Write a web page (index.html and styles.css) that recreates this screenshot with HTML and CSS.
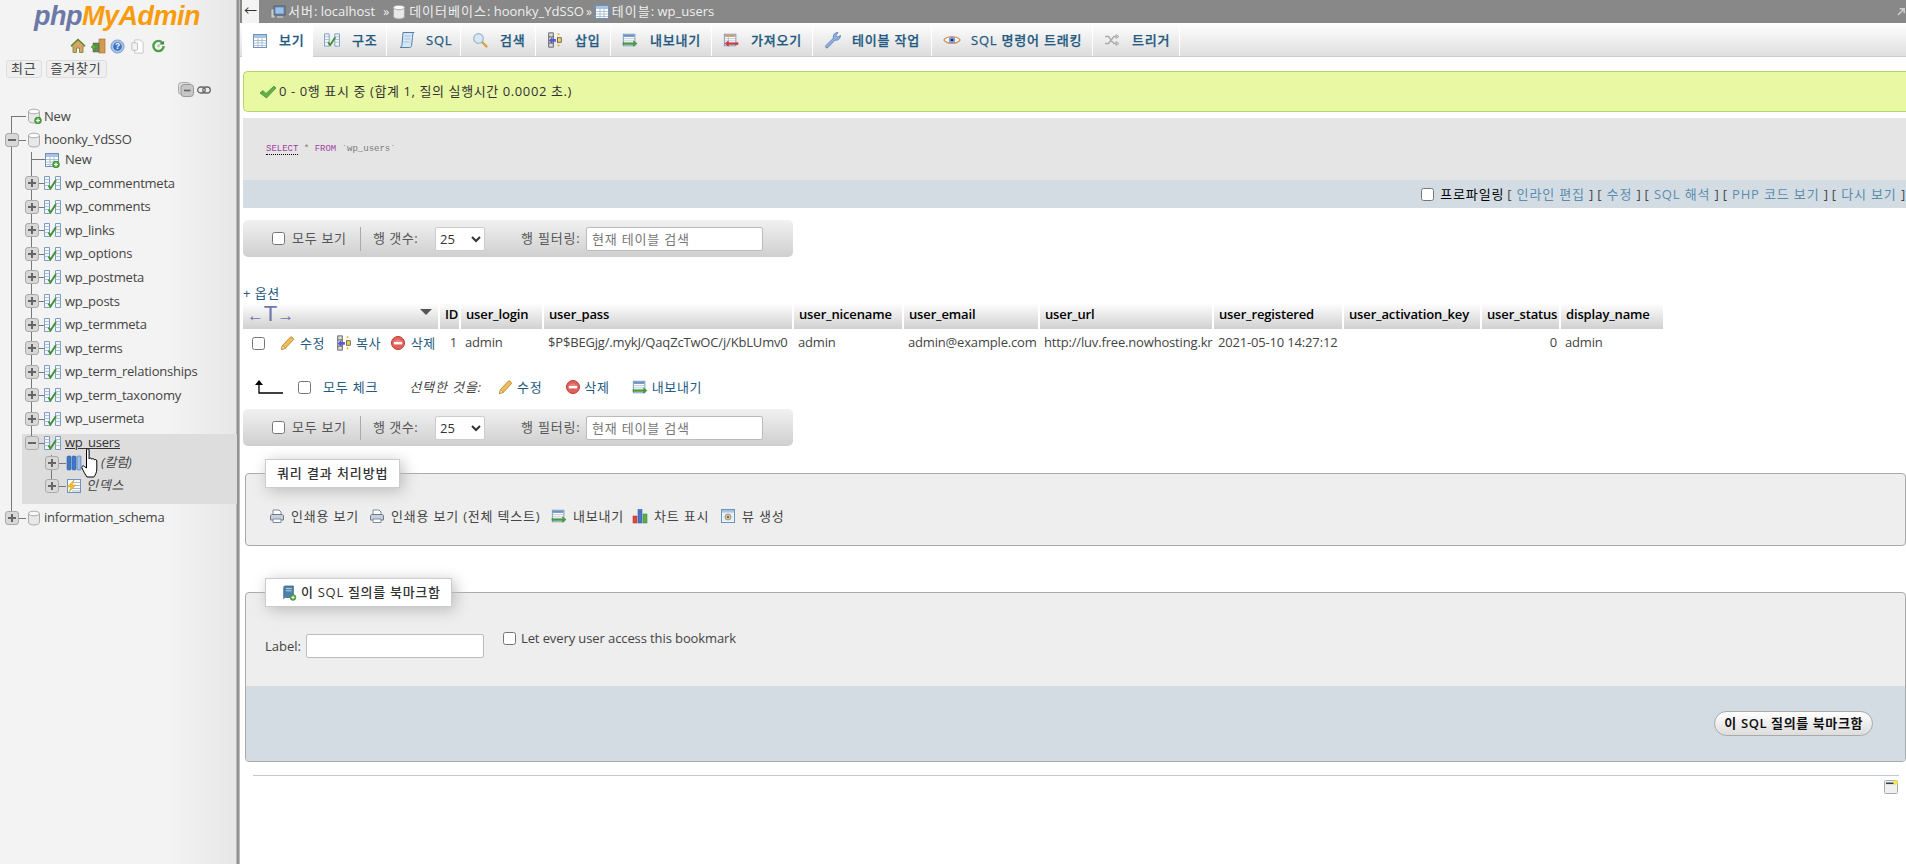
FILE: index.html
```html
<!DOCTYPE html>
<html lang="ko">
<head>
<meta charset="utf-8">
<title>phpMyAdmin</title>
<link rel="stylesheet" href="styles.css">
</head>
<body>
<svg class="defs" aria-hidden="true">
  <defs>
    <symbol id="i-plusb" viewBox="0 0 16 16"><circle cx="12" cy="12.5" r="3.4" fill="#4fa83d" stroke="#2f7a26" stroke-width=".6"/><path d="M10 12.5h4M12 10.500v4" stroke="#fff" stroke-width="1.2"/></symbol>
    <symbol id="i-db" viewBox="0 0 16 16"><path d="M2.500 3.500v9c0 1.300 2.400 2.500 5.500 2.500s5.500-1.200 5.500-2.500v-9z" fill="#e8e8e8" stroke="#9a9a9a" stroke-width=".8"/><ellipse cx="8" cy="3.500" rx="5.500" ry="2.300" fill="#fafafa" stroke="#9a9a9a" stroke-width=".8"/></symbol>
    <symbol id="i-table" viewBox="0 0 16 16"><rect x="1.500" y="1.500" width="13" height="13" fill="#fff" stroke="#6d93bd"/><rect x="2" y="2" width="12" height="3" fill="#a9c4e0"/><path d="M2 7.500h12M2 10h12M2 12.500h12M6 5v9M10 5v9" stroke="#9db4cc" stroke-width=".8"/></symbol>
    <symbol id="i-struct" viewBox="0 0 17 16"><path d="M.5 1.500h5v13h-5zM11.500 1.500h5v13h-5z" fill="#f2f6fb" stroke="#6d93bd" stroke-width=".9"/><path d="M.5 4.500h5M.5 7.500h5M.5 10.500h5M11.500 4.500h5M11.500 7.500h5M11.500 10.500h5" stroke="#9db4cc" stroke-width=".8"/><path d="M4.500 10.500l2 3L12 5" fill="none" stroke="#3f8f33" stroke-width="1.900"/></symbol>
    <symbol id="i-sql" viewBox="0 0 18 18"><path d="M5 1.500h11c-1.500 1-1.500 3-1.500 5l-1 8c-.2 1.500-1 2-2 2H2c1.500-.5 1.800-1.500 2-3z" fill="#d8e6f4" stroke="#4f7fae"/><path d="M6.500 5h6M6 8h6M5.500 11h6" stroke="#9dbad8" stroke-width=".8"/></symbol>
    <symbol id="i-search" viewBox="0 0 16 16"><path d="M9.500 9.500l5 5" stroke="#d9a03c" stroke-width="2.400" stroke-linecap="round"/><circle cx="6.500" cy="6.500" r="4.800" fill="#d6e9f8" stroke="#9fb3c5" stroke-width="1.200"/></symbol>
    <symbol id="i-insert" viewBox="0 0 16 18"><rect x="1" y="1" width="5" height="16" fill="#ddd" stroke="#333" stroke-width=".8"/><path d="M1 5.500h5M1 12.500h5" stroke="#333" stroke-width=".8"/><path d="M9 8H5V5.500L1 9.500l4 4V11h4z" fill="#5a5ad0"/><rect x="11" y="1.500" width="2" height="2" fill="#e3b32c"/><rect x="11" y="6.500" width="4" height="5" fill="#f3d25c" stroke="#222" stroke-width=".7"/><rect x="11" y="14" width="2" height="2" fill="#e3b32c"/></symbol>
    <symbol id="i-export" viewBox="0 0 18 16"><rect x="1.500" y="1.500" width="13" height="13" fill="#fff" stroke="#6d93bd"/><rect x="2" y="2" width="12" height="2.500" fill="#6d93bd"/><path d="M2 6.500h12M2 9h12" stroke="#9db4cc" stroke-width=".8"/><path d="M1 11h12V9l4 3-4 3v-2H1z" fill="#4aa03c" stroke="#2d7a24" stroke-width=".5"/></symbol>
    <symbol id="i-import" viewBox="0 0 18 16"><rect x="1.500" y="1.500" width="13" height="13" fill="#fff" stroke="#6d93bd"/><rect x="2" y="2" width="12" height="2.500" fill="#d69a6a"/><path d="M2 6.500h12M2 9h12M6 4.500V14" stroke="#9db4cc" stroke-width=".8"/><path d="M17 11H6V9l-4 3 4 3v-2h11z" fill="#df3b3b" stroke="#a82525" stroke-width=".5"/></symbol>
    <symbol id="i-wrench" viewBox="0 0 18 18"><path d="M2 14.500l7.500-7.500c-.8-2.500.8-5.500 4.500-5.500l-2 3 1.500 1.500 3-1.500c0 3.500-3 5.500-5.500 4.500L4 16.500c-1.500 1.200-3.300-.5-2-2z" fill="#8fb0e0" stroke="#5878b0" stroke-width=".8"/></symbol>
    <symbol id="i-eye" viewBox="0 0 18 14"><path d="M1 7c3-4.500 13-4.500 16 0-3 4.500-13 4.500-16 0z" fill="#fff" stroke="#d49a6a" stroke-width="1.400"/><circle cx="9" cy="7" r="3.300" fill="#7c9bd8"/><circle cx="9" cy="7" r="1.300" fill="#1b2a66"/></symbol>
    <symbol id="i-trigger" viewBox="0 0 16 14"><path d="M1 3.500h3.500l5.500 7h2.500M1 10.500h3.500l5.500-7h2.500" fill="none" stroke="#aaa" stroke-width="1.300"/><path d="M12 1.500l3 2-3 2zM12 8.500l3 2-3 2z" fill="#ccc" stroke="#888" stroke-width=".5"/></symbol>
    <symbol id="i-pencil" viewBox="0 0 16 16"><path d="M1.500 14.500l1-4 8-8.500c1-.8 3.500 1.500 2.800 2.800l-8 8.500z" fill="#f0bd56" stroke="#a87a20" stroke-width=".8"/><path d="M1.500 14.500l1-4 3 2.800z" fill="#ffe9c0" stroke="#a87a20" stroke-width=".6"/></symbol>
    <symbol id="i-del" viewBox="0 0 16 16"><circle cx="8" cy="8" r="6.500" fill="#e2605a" stroke="#b93a36"/><path d="M4.500 5.500a6 4 0 0 1 7 0" fill="#f2a8a4"/><rect x="3.800" y="6.800" width="8.400" height="2.600" fill="#fff"/></symbol>
    <symbol id="i-print" viewBox="0 0 16 16"><path d="M4 7V2h6l2 2v3" fill="#fff" stroke="#7c8aa0"/><path d="M1.500 8c0-1 1-1.500 1.500-1.500h10c.6 0 1.500.5 1.500 1.500v4h-13z" fill="#c6d0dc" stroke="#6f7c90"/><path d="M4 11h8v3.500H4z" fill="#fff" stroke="#7c8aa0"/></symbol>
    <symbol id="i-chart" viewBox="0 0 16 16"><rect x="1" y="8" width="4" height="7" fill="#e04a3f" stroke="#a52c24" stroke-width=".5"/><rect x="6" y="1.500" width="4" height="13.500" fill="#4a78c8" stroke="#2c5096" stroke-width=".5"/><rect x="11" y="6" width="4" height="9" fill="#5aaf4a" stroke="#37802a" stroke-width=".5"/></symbol>
    <symbol id="i-view" viewBox="0 0 16 16"><rect x="1.500" y="1.500" width="13" height="13" fill="#e8f0f8" stroke="#6d93bd"/><rect x="2" y="2" width="12" height="2.500" fill="#a9c4e0"/><circle cx="8" cy="9" r="3" fill="#d8c8a8" stroke="#8a7a5a" stroke-width=".7"/><circle cx="8" cy="9" r="1" fill="#445"/></symbol>
    <symbol id="i-book" viewBox="0 0 16 18"><path d="M2 2.500c0-1 1-1.500 2-1.500h9v13H4c-1 0-2 .5-2 1.500z" fill="#4f80a8" stroke="#2f5a80" stroke-width=".7"/><path d="M4.500 4h6.500M4.500 6.500h6.500" stroke="#c8dcec" stroke-width="1"/><circle cx="12.500" cy="14" r="3.300" fill="#55aa44" stroke="#2f7a26" stroke-width=".5"/><path d="M10.700 14h3.600M12.500 12.200v3.600" stroke="#fff" stroke-width="1.100"/></symbol>
    <symbol id="i-server" viewBox="0 0 16 16"><rect x="1" y="5" width="4" height="9" fill="#c8ccd0" stroke="#777" stroke-width=".6"/><rect x="4" y="2" width="11" height="9" fill="#5f8fc8" stroke="#555" stroke-width=".8"/><rect x="5.500" y="3.500" width="8" height="6" fill="#9cc0e8"/><path d="M7 13h6" stroke="#bbb" stroke-width="1.600"/></symbol>
    <symbol id="i-check" viewBox="0 0 18 16"><path d="M1 9l3-2.500 3 3L15 2l2 2L7.500 14z" fill="#63b04a" stroke="#3f8a32" stroke-width=".7"/></symbol>
  </defs>
</svg>

<div class="page">
  <nav class="side">
    <div class="logo"><span class="logo-php">php</span><span class="logo-my">MyAdmin</span></div>
    <div class="side-icons">
      <svg class="sic" viewBox="0 0 16 16"><path d="M1 8l7-6.500L15 8h-2v6.500H9.500V10h-3v4.500H3V8z" fill="#d9a468" stroke="#7d8a3a" stroke-width=".9"/><path d="M1 8l7-6.500L15 8" fill="none" stroke="#5c8a2e" stroke-width="1.400"/></svg>
      <svg class="sic" viewBox="0 0 16 16"><rect x="9" y="1" width="6" height="14" fill="#d49a50" stroke="#9a6a28" stroke-width=".6"/><rect x="3" y="5" width="6" height="9" fill="#6a8a5a" stroke="#455" stroke-width=".5"/><path d="M1 9l4-3.500V8h3.500v2H5v2.500z" fill="#5fae3e" stroke="#3c7a26" stroke-width=".5"/></svg>
      <svg class="sic sic-n" viewBox="0 0 16 16"><circle cx="8" cy="8" r="7" fill="#a9c6ea" stroke="#7f9dc4"/><circle cx="8" cy="8" r="4.600" fill="#3f74c0"/><text x="8" y="11" class="q">?</text></svg>
      <svg class="sic sic-n" viewBox="0 0 16 16"><path d="M5 1h6l3 3v11H5z" fill="#fff" stroke="#c4c4c4"/><rect x="2" y="4" width="6" height="8" rx="1" fill="#f4f4f4" stroke="#bbb"/></svg>
      <svg class="sic sic-s" viewBox="0 0 14 14"><path d="M12.500 7A5.500 5.500 0 1 1 7 1.500c2 0 3 .8 4 2" fill="none" stroke="#4fa04a" stroke-width="2.600"/><path d="M7.500 5.500h5.500v-4z" fill="#3f8a3a"/><circle cx="7" cy="7" r="1.500" fill="#a8cfa4"/></svg>
    </div>
    <div class="side-tabs"><span class="side-btn">최근</span><span class="side-btn">즐겨찾기</span></div>
    <div class="side-tools">
      <svg class="collapse" viewBox="0 0 16 15"><rect x=".5" y=".5" width="12" height="12" rx="3" fill="#ddd" stroke="#aaa"/><rect x="3" y="2.500" width="12.500" height="12" rx="3" fill="#c6c6c6" stroke="#999"/><path d="M6 8.500h6.500" stroke="#666" stroke-width="1.600"/></svg>
      <svg class="chain" viewBox="0 0 14 8"><rect x=".7" y="1" width="7.500" height="6" rx="3" fill="none" stroke="#666" stroke-width="1.300"/><rect x="5.800" y="1" width="7.500" height="6" rx="3" fill="none" stroke="#666" stroke-width="1.300"/></svg>
    </div>

    <div class="tree">
      <div class="row r-new0"><span class="g dn-last"></span><svg class="ti db"><use href="#i-db"/><use href="#i-plusb"/></svg><span class="t">New</span></div>
      <div class="row"><span class="g tee"><b class="ex minus"></b></span><svg class="ti db"><use href="#i-db"/></svg><span class="t">hoonky_YdSSO</span></div>
      <div class="row r-new1"><span class="g bar"></span><span class="g tee"></span><svg class="ti tb"><use href="#i-table"/><use href="#i-plusb"/></svg><span class="t">New</span></div>
      <div class="row"><span class="g bar"></span><span class="g tee"><b class="ex"></b></span><svg class="ti st"><use href="#i-struct"/></svg><span class="t">wp_commentmeta</span></div>
      <div class="row"><span class="g bar"></span><span class="g tee"><b class="ex"></b></span><svg class="ti st"><use href="#i-struct"/></svg><span class="t">wp_comments</span></div>
      <div class="row"><span class="g bar"></span><span class="g tee"><b class="ex"></b></span><svg class="ti st"><use href="#i-struct"/></svg><span class="t">wp_links</span></div>
      <div class="row"><span class="g bar"></span><span class="g tee"><b class="ex"></b></span><svg class="ti st"><use href="#i-struct"/></svg><span class="t">wp_options</span></div>
      <div class="row"><span class="g bar"></span><span class="g tee"><b class="ex"></b></span><svg class="ti st"><use href="#i-struct"/></svg><span class="t">wp_postmeta</span></div>
      <div class="row"><span class="g bar"></span><span class="g tee"><b class="ex"></b></span><svg class="ti st"><use href="#i-struct"/></svg><span class="t">wp_posts</span></div>
      <div class="row"><span class="g bar"></span><span class="g tee"><b class="ex"></b></span><svg class="ti st"><use href="#i-struct"/></svg><span class="t">wp_termmeta</span></div>
      <div class="row"><span class="g bar"></span><span class="g tee"><b class="ex"></b></span><svg class="ti st"><use href="#i-struct"/></svg><span class="t">wp_terms</span></div>
      <div class="row"><span class="g bar"></span><span class="g tee"><b class="ex"></b></span><svg class="ti st"><use href="#i-struct"/></svg><span class="t">wp_term_relationships</span></div>
      <div class="row"><span class="g bar"></span><span class="g tee"><b class="ex"></b></span><svg class="ti st"><use href="#i-struct"/></svg><span class="t">wp_term_taxonomy</span></div>
      <div class="row"><span class="g bar"></span><span class="g tee"><b class="ex"></b></span><svg class="ti st"><use href="#i-struct"/></svg><span class="t">wp_usermeta</span></div>
      <div class="hl">
        <div class="row r-last"><span class="g bar"></span><span class="g up"><b class="ex minus"></b></span><svg class="ti st"><use href="#i-struct"/></svg><span class="t u">wp_users</span></div>
        <div class="row r-col"><span class="g bar"></span><span class="g"></span><span class="g tee"><b class="ex"></b></span><svg class="ti cl" viewBox="0 0 16 16"><rect x="1" y="1" width="4" height="14" rx="1" fill="#3f78c8" stroke="#2a5aa0" stroke-width=".5"/><rect x="6" y="1" width="4" height="14" rx="1" fill="#3f78c8" stroke="#2a5aa0" stroke-width=".5"/><rect x="11" y="1" width="4" height="14" rx="1" fill="#9fc0e8" stroke="#2a5aa0" stroke-width=".5"/></svg><span class="t it col">(칼럼)</span></div>
        <div class="row r-idx"><span class="g bar"></span><span class="g"></span><span class="g up"><b class="ex"></b></span><svg class="ti cl" viewBox="0 0 16 16"><rect x="1.500" y="1.500" width="13" height="13" fill="#fff" stroke="#6d93bd"/><path d="M6 4.500h8M6 7.500h8M6 10.500h8M6 13h8" stroke="#8fa8c4" stroke-width=".8"/><path d="M8 2L1 9h4l-2 5 7-7H6z" fill="#f0c030" stroke="#c89820" stroke-width=".5"/></svg><span class="t it idx">인덱스</span></div>
      </div>
      <div class="row r-end"><span class="g up"><b class="ex"></b></span><svg class="ti db"><use href="#i-db"/></svg><span class="t">information_schema</span></div>
    </div>
    <svg class="hand" viewBox="0 0 17 30"><path d="M5.500 2c0-1.600 2.600-1.600 2.600 0v9c.2-1.200 2.600-1.200 2.700.3.200-1 2.500-1 2.600.6.300-.8 2.400-.6 2.400 1.100v8c0 3-1.500 6.500-3 8H6c-1.500-2-4-6.500-5-9-.6-1.700 1.200-3 2.400-1.500L5.500 20z" fill="#fff" stroke="#000" stroke-width="1"/></svg>
  </nav>

  <main class="main">
    <header class="crumbs">
      <span class="back">←</span>
      <svg class="cic"><use href="#i-server"/></svg><span><span class="ko">서버</span>: localhost</span><span class="sep sep1">»</span>
      <svg class="cic c-db"><use href="#i-db"/></svg><span><span class="ko">데이터베이스</span>: hoonky_YdSSO</span><span class="sep sep2">»</span>
      <svg class="cic"><use href="#i-table"/></svg><span><span class="ko">테이블</span>: wp_users</span>
      <svg class="corner" viewBox="0 0 10 10"><path d="M1 9l7-7M3 2h5v5" fill="none" stroke="#cfcfcf" stroke-width="1.600"/></svg>
    </header>

    <div class="tabs">
      <a class="tab on"><svg class="tic"><use href="#i-table"/></svg>보기</a>
      <a class="tab"><svg class="tic"><use href="#i-struct"/></svg>구조</a>
      <a class="tab"><svg class="tic tic-l"><use href="#i-sql"/></svg>SQL</a>
      <a class="tab"><svg class="tic"><use href="#i-search"/></svg>검색</a>
      <a class="tab"><svg class="tic"><use href="#i-insert"/></svg>삽입</a>
      <a class="tab"><svg class="tic"><use href="#i-export"/></svg>내보내기</a>
      <a class="tab"><svg class="tic"><use href="#i-import"/></svg>가져오기</a>
      <a class="tab"><svg class="tic tic-l"><use href="#i-wrench"/></svg>테이블 작업</a>
      <a class="tab"><svg class="tic tic-l"><use href="#i-eye"/></svg>SQL 명령어 트래킹</a>
      <a class="tab"><svg class="tic"><use href="#i-trigger"/></svg>트리거</a>
    </div>

    <div class="msg"><svg class="msg-ic"><use href="#i-check"/></svg>0 - 0행 표시 중 (합계 1, 질의 실행시간 0.0002 초.)</div>

    <div class="sql"><code><span class="kw kw-u">SELECT</span> <span class="op">*</span> <span class="kw">FROM</span> <span class="id">`wp_users`</span></code></div>
    <div class="sqlbar">
      <input type="checkbox" class="cb"><span class="prof">프로파일링</span>
      <span class="blk">[ <a>인라인 편집</a> ]</span>
      <span class="blk">[ <a>수정</a> ]</span>
      <span class="blk">[ <a>SQL 해석</a> ]</span>
      <span class="blk">[ <a>PHP 코드 보기</a> ]</span>
      <span class="blk">[ <a>다시 보기</a> ]</span>
    </div>

    <div class="nav">
      <input type="checkbox" class="cb"><span class="n-all">모두 보기</span><span class="n-sep"></span>
      <span class="n-rows">행 갯수:</span><select class="sel"><option>25</option></select>
      <span class="n-filter">행 필터링:</span><input class="inp" placeholder="현재 테이블 검색">
    </div>

    <div class="opts"><a>+ 옵션</a></div>

    <table class="grid">
      <colgroup>
        <col class="c0"><col class="c1"><col class="c2"><col class="c3"><col class="c4"><col class="c5"><col class="c6"><col class="c7"><col class="c8"><col class="c9"><col class="c10">
      </colgroup>
      <thead>
        <tr>
          <th class="ctl"><span class="harrows">←<b>T</b>→</span><span class="tri"></span></th>
          <th>ID</th><th>user_login</th><th>user_pass</th><th>user_nicename</th><th>user_email</th><th>user_url</th><th>user_registered</th><th>user_activation_key</th><th>user_status</th><th>display_name</th>
        </tr>
      </thead>
      <tbody>
        <tr>
          <td class="ctl"><div class="acts">
            <input type="checkbox" class="cb cb-row">
            <svg class="ic16 a-ed"><use href="#i-pencil"/></svg><a>수정</a>
            <svg class="ic16 a-cp"><use href="#i-insert"/></svg><a>복사</a>
            <svg class="ic16 a-dl"><use href="#i-del"/></svg><a>삭제</a>
          </div></td>
          <td class="num">1</td><td>admin</td><td>$P$BEGjg/.mykJ/QaqZcTwOC/j/KbLUmv0</td><td>admin</td><td>admin@example.com</td><td>http://luv.free.nowhosting.kr</td><td>2021-05-10 14:27:12</td><td></td><td class="num">0</td><td>admin</td>
        </tr>
      </tbody>
    </table>

    <div class="bulk">
      <svg class="barrow" viewBox="0 0 28 14"><path d="M4 2v11h24" fill="none" stroke="#000" stroke-width="1.300"/><path d="M4 0L0 5h8z" fill="#000"/></svg>
      <input type="checkbox" class="cb"><a class="b-all">모두 체크</a>
      <em class="b-sel">선택한 것을:</em>
      <svg class="ic16 b-i1"><use href="#i-pencil"/></svg><a>수정</a>
      <svg class="ic16 b-i2"><use href="#i-del"/></svg><a>삭제</a>
      <svg class="ic16 b-i3"><use href="#i-export"/></svg><a>내보내기</a>
    </div>

    <div class="nav nav2">
      <input type="checkbox" class="cb"><span class="n-all">모두 보기</span><span class="n-sep"></span>
      <span class="n-rows">행 갯수:</span><select class="sel"><option>25</option></select>
      <span class="n-filter">행 필터링:</span><input class="inp" placeholder="현재 테이블 검색">
    </div>

    <section class="fs fs1">
      <div class="lg">쿼리 결과 처리방법</div>
      <div class="links">
        <span class="lk"><svg class="ic16"><use href="#i-print"/></svg><a>인쇄용 보기</a></span>
        <span class="lk"><svg class="ic16"><use href="#i-print"/></svg><a>인쇄용 보기 (전체 텍스트)</a></span>
        <span class="lk"><svg class="ic16"><use href="#i-export"/></svg><a>내보내기</a></span>
        <span class="lk"><svg class="ic16"><use href="#i-chart"/></svg><a>차트 표시</a></span>
        <span class="lk"><svg class="ic16"><use href="#i-view"/></svg><a>뷰 생성</a></span>
      </div>
    </section>

    <section class="fs fs2">
      <div class="lg lg2"><svg class="ic16 lgi"><use href="#i-book"/></svg>이 SQL 질의를 북마크함</div>
      <div class="bm">
        <label class="bm-l">Label:</label><input class="inp bm-i">
        <input type="checkbox" class="cb bm-c"><span class="bm-t">Let every user access this bookmark</span>
      </div>
      <div class="foot"><button class="btn">이 SQL 질의를 북마크함</button></div>
    </section>

    <hr class="rule">
    <div class="console-row">
      <svg class="console" viewBox="0 0 14 14"><rect x=".5" y=".5" width="13" height="13" rx="1" fill="#f0f0f0" stroke="#aaa"/><rect x="2" y="2.500" width="8" height="1.600" fill="#2d3f5a"/><circle cx="11.500" cy="2.500" r="2.300" fill="#f4e84a"/></svg>
    </div>
  </main>
</div>
</body>
</html>
```

FILE: styles.css
```css
* { box-sizing: border-box; }
html, body { margin: 0; height: 864px; overflow: hidden; background: #fff; }
body { font: 13px/1.3 "Open Sans", "Noto Sans CJK KR", sans-serif; color: #444; }
.defs { position: absolute; width: 0; height: 0; }
a { color: #235a81; }
.page { display: flex; height: 864px; width: 1906px; overflow: hidden; }

/* sidebar */
.side { position: relative; flex: 0 0 240px; background: linear-gradient(to right, #f3f3f3 0, #f3f3f3 170px, #e7e7e7 236px, #8b8b8b 237px, #9a9a9a 239px, #d8d8d8 240px); }
.logo { height: 36px; padding: 0 0 0 34px; font: italic bold 27px/32px "Liberation Sans", sans-serif; letter-spacing: -.5px; white-space: nowrap; }
.logo-php { color: #6c78a8; }
.logo-my { color: #f89c0e; }
.side-icons { display: flex; align-items: center; height: 20px; padding-left: 70px; gap: 4px; }
.sic { width: 16px; height: 16px; }
.sic-n { width: 15px; height: 15px; margin-right: 1px; }
.sic-s { width: 13px; height: 14px; margin-left: 2px; }
.q { font: bold 9px "Liberation Sans", sans-serif; fill: #fff; text-anchor: middle; }
.side-tabs { display: flex; gap: 4px; padding: 4px 0 0 6px; }
.side-btn { height: 18px; padding: 0 4px; border: 1px solid #ddd; border-radius: 3px; background: #efefef; font-size: 13px; line-height: 15px; letter-spacing: .8px; color: #444; }
.side-tools { display: flex; align-items: center; height: 15px; margin-top: 4px; padding-left: 178px; gap: 3px; }
.collapse { width: 16px; height: 15px; }
.chain { width: 14px; height: 8px; }
.tree { margin-top: 7px; padding-left: 1px; letter-spacing: -.22px; }
.row { display: flex; align-items: center; height: 23.600px; position: relative; z-index: 1; white-space: nowrap; }
.r-new0 { height: 24px; }
.r-new1 { height: 19.600px; }
.r-new1 .t, .r-new1 .ti { margin-bottom: 3px; }
.r-last { height: 24.400px; }
.r-col { height: 15.600px; }
.r-idx { height: 30.400px; }
.r-end { height: 33.600px; }
.g { flex: 0 0 20px; align-self: stretch; position: relative; }
.bar::before, .tee::before { content: ""; position: absolute; left: 10px; top: 0; bottom: 0; width: 1px; background: #777; }
.up::before { content: ""; position: absolute; left: 10px; top: 0; height: 50%; width: 1px; background: #777; }
.dn-last::before { content: ""; position: absolute; left: 10px; top: 50%; bottom: 0; width: 1px; background: #777; }
.tee::after, .up::after, .dn-last::after { content: ""; position: absolute; left: 10px; top: 50%; width: 15px; height: 1px; background: #777; }
.r-new1 .tee::after { top: 40%; }
.ex { position: absolute; z-index: 1; left: 4px; top: 50%; margin-top: -7px; width: 14px; height: 14px; border: 1px solid #aaa; border-radius: 3px; background: #d8d8d8; }
.ex::before { content: ""; position: absolute; left: 2px; right: 2px; top: 5px; height: 2px; background: #666; }
.ex::after { content: ""; position: absolute; top: 2px; bottom: 2px; left: 5px; width: 2px; background: #666; }
.ex.minus::after { display: none; }
.ti { position: relative; z-index: 1; flex: none; width: 16px; height: 16px; }
.ti.db { margin-left: 5px; margin-right: 2px; width: 16px; }
.ti.tb { margin-left: 3px; margin-right: 5px; }
.ti.st { margin-left: 3px; margin-right: 4px; width: 17px; }
.ti.cl { margin-left: 5px; margin-right: 4px; }
.t { color: #444; }
.u { text-decoration: underline; color: #333; }
.it { font-style: italic; }
.col { margin-left: 15px; }
.idx { letter-spacing: .8px; }
.hl { position: relative; }
.hl::before { content: ""; position: absolute; left: 21px; right: 3px; top: 3px; bottom: -3px; background: #ddd; }
.hand { position: absolute; z-index: 5; left: 81px; top: 448px; width: 17px; height: 30px; }

/* main */
.main { flex: 0 0 1666px; min-width: 0; }
.crumbs { display: flex; align-items: center; height: 23px; background: #888; color: #eee; white-space: nowrap; position: relative; }
.back { display: block; width: 17px; height: 23px; margin: 0 11px 0 2px; background: #f4f4f4; color: #333; text-align: center; line-height: 20px; }
.cic { width: 16px; height: 16px; margin-right: 2px; }
.c-db { margin-right: 2px; }
.ko { letter-spacing: 1px; }
.sep { font-size: 12px; }
.sep1 { margin: 0 2px 0 8px; }
.sep2 { margin: 0 2px 0 2px; }
.corner { position: absolute; right: 0; top: 7px; width: 9px; height: 9px; }
.tabs { display: flex; height: 34px; padding-left: 2px; background: linear-gradient(#fff, #dfdfdf); border-bottom: 1px solid #ccc; }
.tab { display: flex; flex: none; align-items: center; height: 33px; padding: 1px 0 0 11px; border-right: 1px solid #fff; font-weight: 500; letter-spacing: .8px; -webkit-text-stroke: .25px #235a81; color: #235a81; white-space: nowrap; background: linear-gradient(#fff, #dcdcdc); }
.tab.on { background: #fff; height: 34px; padding-left: 10px; }
.tab:nth-child(1) { width: 71px; }
.tab:nth-child(2) { width: 74px; }
.tab:nth-child(3) { width: 74px; }
.tab:nth-child(4) { width: 75px; }
.tab:nth-child(5) { width: 75px; }
.tab:nth-child(6) { width: 101px; }
.tab:nth-child(7) { width: 101px; }
.tab:nth-child(8) { width: 119px; }
.tab:nth-child(9) { width: 161px; }
.tab:nth-child(10) { width: 87px; }
.tic { flex: none; width: 16px; height: 16px; margin-right: 12px; }
.tic-l { width: 18px; height: 18px; margin-right: 10px; }
.tab.on .tic { margin-right: 11px; }
.msg { display: flex; align-items: center; height: 41px; margin: 14px -20px 0 3px; padding-left: 15px; background: #e8f8a3; border: 1px solid #b6d46a; border-width: 1px 0 1px 1px; border-radius: 5px 0 0 5px; color: #333; letter-spacing: .6px; }
.msg-ic { width: 18px; height: 16px; margin-right: 2px; }
.sql { height: 62px; margin: 6px 0 0 3px; padding-top: 24px; background: #e5e5e5; }
.sql code { display: block; padding-left: 23px; font: 9px/14px "Liberation Mono", monospace; }
.kw { color: #a040a0; }
.kw-u { border-bottom: 1px dotted #000; }
.op { color: #777; }
.id { color: #7a7a7a; }
.sqlbar { display: flex; justify-content: flex-end; align-items: center; gap: 3px; height: 28px; margin-left: 3px; padding-right: 0; background: #d3dce3; color: #444; white-space: nowrap; letter-spacing: .85px; }
.sqlbar a { color: #5a8cb0; }
.cb { flex: none; width: 13px; height: 13px; margin: 0; accent-color: #fff; }
.prof { margin-left: 3px; color: #000; }
.nav { display: flex; align-items: center; width: 550px; height: 37px; margin: 12px 0 0 3px; padding-left: 29px; background: linear-gradient(#f1f1f1, #cfcfcf); border-radius: 5px; }
.n-all { margin-left: 7px; width: 61px; white-space: nowrap; color: #555; letter-spacing: .7px; }
.n-sep { width: 1px; height: 24px; margin: 0 12px 0 7px; background: #aaa; }
.n-rows { width: 62px; white-space: nowrap; color: #555; letter-spacing: .5px; }
.sel { width: 50px; height: 24px; background: #fff; border: 1px solid #ccc; border-radius: 2px; font: 13px "Open Sans", sans-serif; color: #333; }
.n-filter { margin-left: 36px; width: 65px; white-space: nowrap; color: #555; letter-spacing: .8px; }
.inp { width: 177px; height: 24px; padding: 0 5px; background: #fff; border: 1px solid #bbb; border-radius: 2px; font: 13px "Open Sans", "Noto Sans CJK KR", sans-serif; color: #333; }
.nav .inp { letter-spacing: .8px; }
.inp::placeholder { color: #777; }
.opts { height: 18px; margin: 28px 0 0 3px; line-height: 16px; letter-spacing: .5px; }
.grid { table-layout: fixed; width: 1420px; margin-left: 3px; border-collapse: collapse; }
.c0 { width: 196px; } .c1 { width: 21px; } .c2 { width: 83px; } .c3 { width: 250px; } .c4 { width: 110px; } .c5 { width: 136px; }
.c6 { width: 174px; } .c7 { width: 130px; } .c8 { width: 138px; } .c9 { width: 79px; } .c10 { width: 103px; }
.grid th { height: 26px; padding: 0 3px 3px 5px; background: linear-gradient(#fff, #d0d0d0); border-right: 2px solid #fff; color: #000; font-weight: 600; text-align: left; white-space: nowrap; letter-spacing: -.15px; }
.grid th:last-child { border-right: 0; }
.grid td { height: 29px; padding: 0 3px 2px 5px; color: #444; white-space: nowrap; letter-spacing: -.17px; }
.grid th.ctl { position: relative; padding: 0; }
.harrows { display: block; padding-left: 4px; color: #6f77ab; font: 17px/26px "Liberation Sans", sans-serif; white-space: nowrap; }
.harrows b { font-weight: 400; font-size: 22px; line-height: 22px; }
.tri { position: absolute; right: 6px; top: 6px; border: 6px solid transparent; border-top: 6px solid #555; border-bottom: 0; }
.grid td.num { text-align: right; }
.grid td.ctl { padding: 0; letter-spacing: .5px; }
.acts { display: flex; align-items: center; white-space: nowrap; }
.ic16 { flex: none; width: 16px; height: 16px; }
.cb-row { margin-left: 9px; }
.a-ed { margin: 0 4px 0 15px; }
.a-cp { margin: 0 4px 0 11px; }
.a-dl { margin: 0 5px 0 9px; }
.bulk { display: flex; align-items: center; height: 24px; margin: 17px 0 0 15px; white-space: nowrap; letter-spacing: .7px; }
.barrow { width: 28px; height: 14px; margin-right: 15px; }
.b-all { margin-left: 12px; letter-spacing: .8px; }
.b-sel { margin-left: 31px; margin-right: 16px; color: #444; letter-spacing: .9px; }
.b-i1 { margin-right: 3px; }
.b-i2 { margin: 0 3px 0 23px; }
.b-i3 { margin: 0 4px 0 22px; }
.nav2 { margin-top: 10px; }
.fs { position: relative; margin-left: 5px; background: #eee; border: 1px solid #aaa; border-radius: 4px; }
.fs1 { height: 73px; margin-top: 27px; }
.fs2 { height: 170px; margin-top: 46px; }
.lg { position: absolute; left: 19px; top: -15px; height: 29px; padding: 0 11px; background: #fff; border: 1px solid #ccc; color: #333; font-weight: 500; line-height: 27px; letter-spacing: .9px; box-shadow: 3px 3px 15px #bbb; white-space: nowrap; }
.lg2 { display: flex; align-items: center; padding: 0 10px 0 15px; letter-spacing: .7px; }
.lgi { margin-right: 4px; }
.links { display: flex; align-items: center; height: 71px; padding: 14px 0 0 23px; white-space: nowrap; }
.lk { display: flex; align-items: center; flex: none; }
.lk:nth-child(1) { width: 100px; }
.lk:nth-child(2) { width: 182px; }
.lk:nth-child(3) { width: 81px; }
.lk:nth-child(4) { width: 88px; }
.links a { margin-left: 6px; color: #444; letter-spacing: .8px; }
.bm { position: relative; display: flex; align-items: center; height: 93px; padding: 13px 0 0 19px; }
.bm-l { margin-right: 5px; }
.bm-i { width: 178px; }
.bm-c { margin: -16px 0 0 19px; }
.bm-t { margin: -16px 0 0 5px; letter-spacing: -.1px; }
.foot { display: flex; justify-content: flex-end; align-items: center; height: 75px; padding: 0 32px 0 0; background: #d3dce3; border-radius: 0 0 4px 4px; }
.btn { height: 25px; padding: 0 9px; background: linear-gradient(#fff, #ddd); border: 1px solid #aaa; border-radius: 13px; color: #111; font: 600 13px/1 "Open Sans", "Noto Sans CJK KR", sans-serif; letter-spacing: .6px; white-space: nowrap; }
.rule { height: 1px; margin: 13px 7px 0 13px; background: #ccc; border: 0; border-top: 1px solid #c4c8d4; }
.console-row { display: flex; justify-content: flex-end; padding: 4px 8px 0 0; }
.console { width: 14px; height: 14px; }
```
